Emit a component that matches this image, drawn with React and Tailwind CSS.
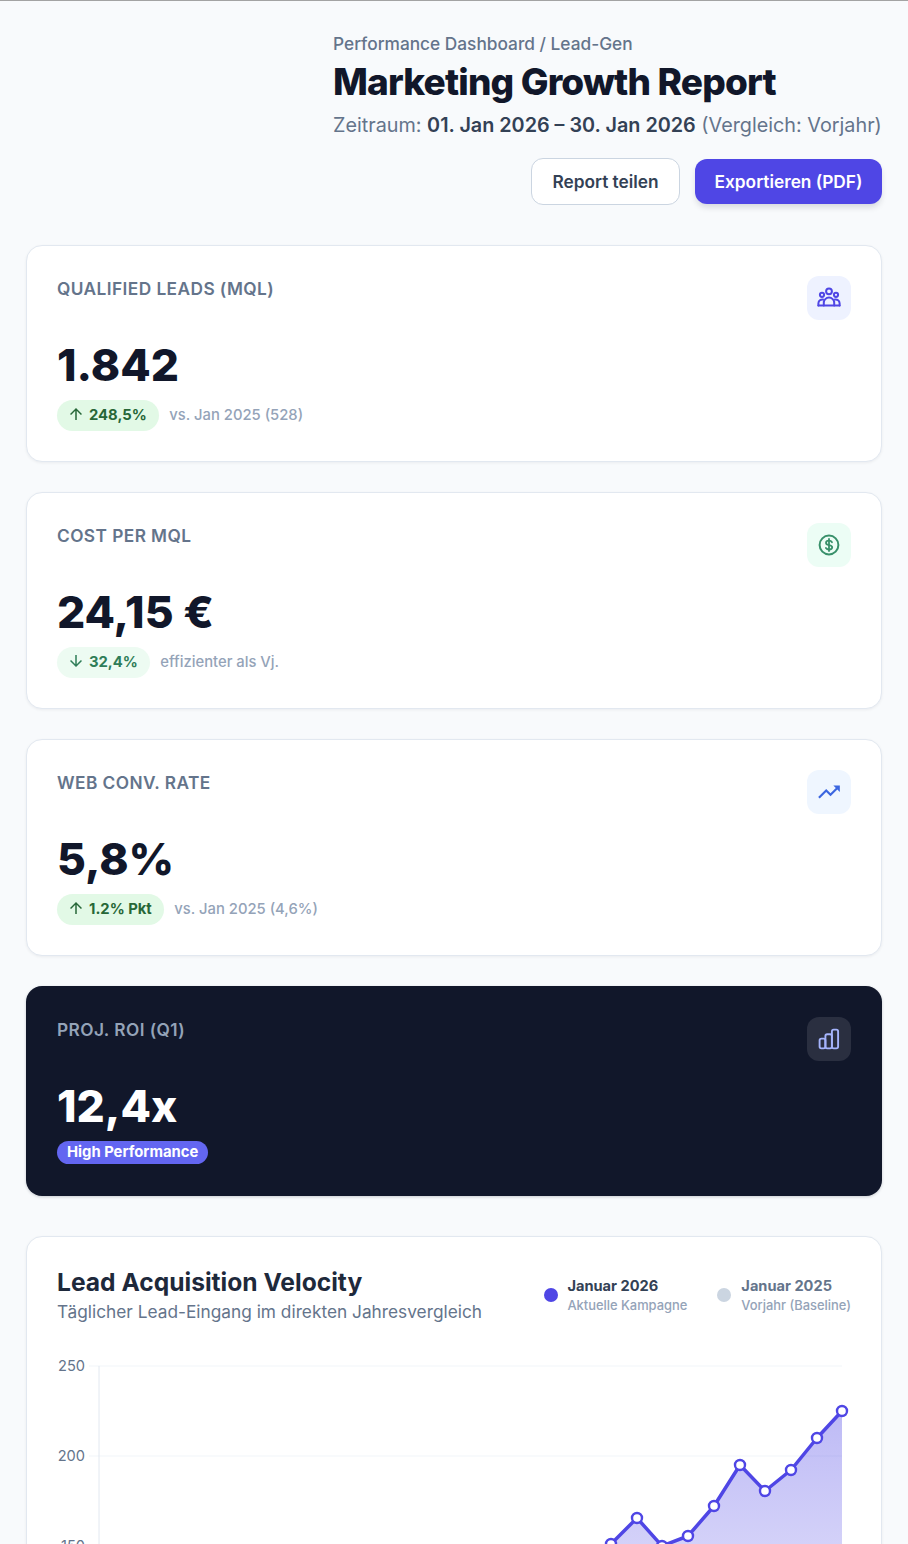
import React from "react";
import { MdTrendingUp, MdArrowUpward, MdArrowDownward } from "react-icons/md";

const pts = [[99,1780],[127,1760],[153,1740],[179,1750],[205,1720],[230,1730],[256,1700],[282,1690],[307,1670],[333,1680],[359,1650],[384,1640],[410,1620],[436,1610],[461,1630],[487,1600],[513,1590],[538,1570],[560,1565],[586,1558],[611,1544],[637,1518],[662,1546],[688,1536],[714,1506],[740,1465],[765,1491],[791,1470],[817,1438],[842,1411]];
const ox = 57, oy = 1356;
const line = pts.map(([x,y]) => `${x-ox},${y-oy}`).join(" ");

function GroupIcon() {
  return (
    <svg width="24" height="24" viewBox="0 0 24 24" fill="none" stroke="currentColor" strokeWidth="2" strokeLinecap="round" strokeLinejoin="round">
      <circle cx="12" cy="5.3" r="2.9" />
      <circle cx="5" cy="8.8" r="2.1" />
      <circle cx="19" cy="8.8" r="2.1" />
      <path d="M6.8 19.4v-2.6a5.2 5.2 0 0 1 10.4 0v2.6" />
      <path d="M1.4 19.4h21.2" />
      <path d="M1.4 19.4v-2.2a4 4 0 0 1 4.6-3.7" />
      <path d="M22.6 19.4v-2.2a4 4 0 0 0-4.6-3.7" />
    </svg>
  );
}

function DollarIcon() {
  return (
    <svg width="24" height="24" viewBox="0 0 24 24" fill="none" stroke="currentColor" strokeWidth="2" strokeLinecap="round" strokeLinejoin="round">
      <circle cx="12" cy="12" r="9.4" />
      <path d="M15 9.2c-.6-1-1.7-1.5-3-1.5-1.7 0-3 .8-3 2.2 0 3 6.2 1.4 6.2 4.4 0 1.4-1.4 2.2-3.1 2.2-1.4 0-2.6-.6-3.2-1.5" strokeWidth="1.8" />
      <path d="M12 6v12" strokeWidth="1.8" />
    </svg>
  );
}

function BarsIcon() {
  return (
    <svg width="24" height="24" viewBox="0 0 24 24" fill="none" stroke="currentColor" strokeWidth="1.9">
      <rect x="2.6" y="11.6" width="5.8" height="9.8" rx="1.8" />
      <rect x="8.4" y="7.2" width="6.5" height="14.2" rx="1.8" />
      <rect x="14.9" y="2.6" width="6.2" height="18.8" rx="1.8" />
    </svg>
  );
}

function Kpi({ label, value, icon, iconBox, badge, badgeCls, note }) {
  return (
    <div className="rounded-2xl border border-[#e2e8f0] bg-white p-[30px] shadow-[0_1px_3px_rgba(15,23,42,0.06)] h-[217px] flex flex-col">
      <div className="flex justify-between items-start">
        <div className="text-[17.3px] font-semibold tracking-[0.43px] text-[#64748b] leading-6 mt-[1px] uppercase">{label}</div>
        <div className={`w-[44px] h-[44px] rounded-xl flex items-center justify-center ${iconBox}`}>{icon}</div>
      </div>
      <div className="text-[44.3px] leading-[48px] font-extrabold text-[#11172a] mt-[21px]">{value}</div>
      <div className="flex items-center gap-[10px] mt-[11px]">
        <span className={`inline-flex items-center gap-[4px] h-[31px] pl-[10px] pr-[12.5px] rounded-full text-[14.8px] font-bold ${badgeCls}`}>{badge}</span>
        <span className="text-[14.8px] font-medium text-[#94a3b8]">{note}</span>
      </div>
    </div>
  );
}

export default function App() {
  return (
    <div className="h-[1544px] overflow-hidden bg-[#f8fafc] border-t border-[#a3a3a3] px-[26px] pt-[33px] font-['Inter',sans-serif]">
      <header className="flex flex-col items-end">
        <div className="w-[549px]">
          <div className="text-[17.3px] font-medium text-[#64748b] leading-5">Performance Dashboard / Lead-Gen</div>
          <h1 className="text-[37px] leading-10 font-extrabold tracking-[-0.83px] text-[#11172a] mt-[8px]">Marketing Growth Report</h1>
          <div className="text-[19.8px] leading-7 text-[#64748b] mt-[9px] whitespace-nowrap">Zeitraum: <span className="font-semibold text-[#334155]">01. Jan 2026 – 30. Jan 2026</span> (Vergleich: Vorjahr)</div>
        </div>
        <div className="flex gap-[15px] mt-[19px]">
          <button className="h-[47px] w-[149px] rounded-xl border border-[#cbd5e1] bg-white text-[17.3px] font-semibold text-[#334155]">Report teilen</button>
          <button className="h-[45px] w-[187px] mt-[1px] rounded-xl bg-[#4f46e5] text-[17.3px] font-semibold text-white shadow-[0_4px_6px_-1px_rgba(15,23,42,0.15)]">Exportieren (PDF)</button>
        </div>
      </header>

      <section className="flex flex-col gap-[30px] mt-[40px]">
        <Kpi label="Qualified Leads (MQL)" value="1.842" iconBox="bg-[#eef2ff] text-[#4f46e5]" icon={<GroupIcon />} badgeCls="bg-[#e2f9e6] text-[#276738]" badge={<><MdArrowUpward size={18} className="-mt-1" />248,5%</>} note="vs. Jan 2025 (528)" />
        <Kpi label="Cost per MQL" value="24,15 €" iconBox="bg-[#ecfdf5] text-[#38906a]" icon={<DollarIcon />} badgeCls="bg-[#edfbf2] text-[#2f7d58]" badge={<><MdArrowDownward size={18} className="-mt-1" />32,4%</>} note="effizienter als Vj." />
        <Kpi label="Web Conv. Rate" value="5,8%" iconBox="bg-[#eff6ff] text-[#3b66e0]" icon={<MdTrendingUp size={26} />} badgeCls="bg-[#e2f9e6] text-[#276738]" badge={<><MdArrowUpward size={18} className="-mt-1" />1.2% Pkt</>} note="vs. Jan 2025 (4,6%)" />
        <div className="rounded-2xl bg-[#11172a] p-[31px] h-[210px] flex flex-col shadow-[0_1px_3px_rgba(15,23,42,0.2)]">
          <div className="flex justify-between items-start">
            <div className="text-[17.3px] font-semibold tracking-[0.43px] text-[#94a3b8] leading-6 mt-[1px] uppercase">Proj. ROI (Q1)</div>
            <div className="w-[44px] h-[44px] rounded-xl flex items-center justify-center bg-[#2a2f40] text-[#a5b4fc]"><BarsIcon /></div>
          </div>
          <div className="text-[44.3px] leading-[48px] font-extrabold text-white mt-[21px]">12,4x</div>
          <div className="mt-[11px] flex"><span className="inline-flex items-center h-[23px] px-[10px] rounded-full bg-[#6366f1] text-[14.8px] font-bold text-white">High Performance</span></div>
        </div>
      </section>

      <section className="mt-[40px] rounded-2xl border border-[#e2e8f0] bg-white px-[30px] pt-[30px] shadow-[0_1px_3px_rgba(15,23,42,0.06)]">
        <div className="flex justify-between items-start">
          <div>
            <h2 className="text-[24.6px] font-bold leading-8 text-[#1e293b] -mt-[1px]">Lead Acquisition Velocity</h2>
            <p className="text-[17.3px] text-[#64748b] leading-6 mt-[2px]">Täglicher Lead-Eingang im direkten Jahresvergleich</p>
          </div>
          <div className="flex gap-[30px] mt-[9px]">
            <div className="flex items-center gap-[9.5px]">
              <span className="w-[14px] h-[14px] rounded-full bg-[#4f46e5]" />
              <div><div className="text-[14.6px] font-bold text-[#334155] leading-[21px]">Januar 2026</div><div className="text-[12.9px] font-medium text-[#94a3b8] leading-[17px]">Aktuelle Kampagne</div></div>
            </div>
            <div className="flex items-center gap-[10px]">
              <span className="w-[14px] h-[14px] rounded-full bg-[#cbd5e1]" />
              <div><div className="text-[14.6px] font-bold text-[#64748b] leading-[21px]">Januar 2025</div><div className="text-[12.9px] font-medium text-[#94a3b8] leading-[17px]">Vorjahr (Baseline)</div></div>
            </div>
          </div>
        </div>
        <svg width="794" height="480" className="block mt-[32px] overflow-visible">
          <defs>
            <linearGradient id="area" gradientUnits="userSpaceOnUse" x1="0" y1="55" x2="0" y2="460">
              <stop offset="0" stopColor="#4f46e5" stopOpacity="0.37" />
              <stop offset="1" stopColor="#4f46e5" stopOpacity="0" />
            </linearGradient>
          </defs>
          {[10,100,190,280,370,460].map(y => <line key={y} x1="32" x2="785" y1={y} y2={y} stroke="#f1f5f9" strokeWidth="1" />)}
          <line x1="42" x2="42" y1="10" y2="460" stroke="#e2e8f0" strokeWidth="1" />
          {[["250",10],["200",100],["150",190],["100",280],["50",370],["0",460]].map(([t,y]) => <text key={t} x="28" y={y+5} textAnchor="end" fontSize="14.6" fill="#64748b" fontFamily="Inter">{t}</text>)}
          <polygon points={`42,460 ${line} 785,460`} fill="url(#area)" />
          <polyline points={line} fill="none" stroke="#4f46e5" strokeWidth="3.5" strokeLinejoin="round" />
          {pts.map(([x,y]) => <circle key={x} cx={x-ox} cy={y-oy} r="5" fill="#fff" stroke="#4f46e5" strokeWidth="2.4" />)}
        </svg>
      </section>
    </div>
  );
}
